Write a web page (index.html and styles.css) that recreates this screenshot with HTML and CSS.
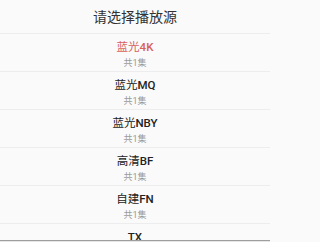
FILE: index.html
```html
<!DOCTYPE html>
<html lang="zh">
<head>
<meta charset="utf-8">
<link rel="stylesheet" href="styles.css">
</head>
<body>
<div class="sheet">
  <div class="title">请选择播放源</div>
  <ul class="list">
    <li class="item active"><div class="name">蓝光<b>4K</b></div><div class="sub">共1集</div></li>
    <li class="item"><div class="name">蓝光<b>MQ</b></div><div class="sub">共1集</div></li>
    <li class="item"><div class="name">蓝光<b>NBY</b></div><div class="sub">共1集</div></li>
    <li class="item"><div class="name">高清<b>BF</b></div><div class="sub">共1集</div></li>
    <li class="item"><div class="name">自建<b>FN</b></div><div class="sub">共1集</div></li>
    <li class="item"><div class="name"><b>TX</b></div><div class="sub">共1集</div></li>
  </ul>
  <div class="bottom"></div>
</div>
</body>
</html>
```
FILE: styles.css
```css
html, body {
  margin: 0;
  padding: 0;
  background: #fafafa;
}
body {
  font-family: "Roboto", "Noto Sans CJK SC", sans-serif;
  height: 242px;
  overflow: hidden;
}
.sheet {
  position: relative;
  width: 270px;
  height: 242px;
  overflow: hidden;
}
.title {
  height: 33px;
  line-height: 33px;
  text-align: center;
  font-size: 14px;
  color: #333;
  border-bottom: 1px solid #ededed;
  font-family: "Noto Sans CJK SC", sans-serif;
}
.list {
  list-style: none;
  margin: 0;
  padding: 0;
}
.item {
  height: 37px;
  border-bottom: 1px solid #ededed;
  text-align: center;
}
.name {
  padding-top: 6px;
  height: 15px;
  line-height: 15px;
  font-size: 11.5px;
  color: #222;
}
.name b {
  font-family: "Roboto", sans-serif;
  font-weight: 500;
}
.item.active .name {
  color: #d9605c;
}
.sub {
  margin-top: 1px;
  line-height: 14px;
  font-size: 9px;
  color: #9a9a9a;
}
.bottom {
  position: absolute;
  left: 0;
  right: 0;
  top: 240px;
  height: 2px;
  background: #e6e6e6;
  border-top: 1px solid #9e9e9e;
}
```
